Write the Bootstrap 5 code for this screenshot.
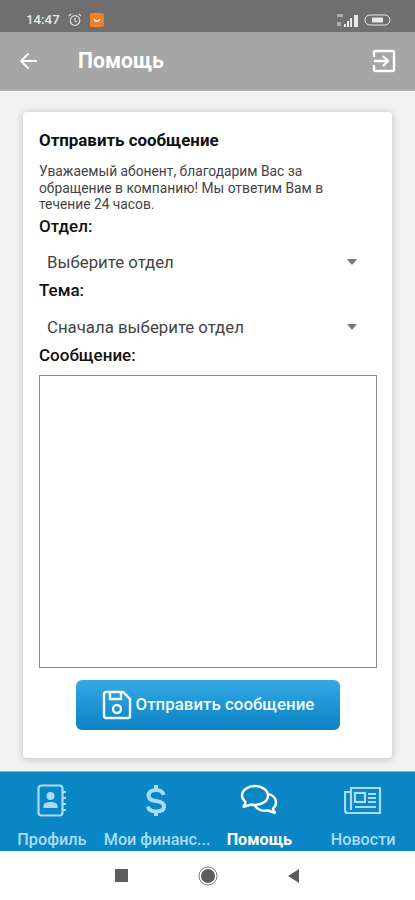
<!DOCTYPE html>
<html lang="ru">
  <head>
    <meta charset="UTF-8" />
    <meta name="viewport" content="width=device-width, initial-scale=1.0" />
    <title>Помощь</title>
    <link href="https://cdn.jsdelivr.net/npm/bootstrap@5.3.0/dist/css/bootstrap.min.css" rel="stylesheet" />
    <style>
      body {
        font-family: Roboto, "Liberation Sans", sans-serif;
        background: #f2f2f2;
        height: 900px;
        overflow: hidden;
        color: #111;
      }
      .status-bar {
        height: 32px;
        background: #6f6f6f;
        color: #e8e8e8;
        font-size: 13.300px;
        font-weight: 500;
        padding: 8px 24px 0 26px;
      }
      .top-bar {
        height: 59px;
        background: #a6a6a6;
        color: #fff;
        padding: 0 19px;
        border-bottom: 1px solid #b4b4b4;
      }
      .top-title {
        font-size: 21.200px;
        font-weight: 700;
        margin-left: 39px;
      }
      .page-main {
        height: 680px;
        padding: 21px 23px 13px;
      }
      .msg-card {
        height: 646px;
        border: 0;
        border-radius: 4px;
        padding: 18px 15px 28px 16px;
        box-shadow: 0 1px 8px rgba(0, 0, 0, 0.22);
      }
      .msg-title {
        font-size: 16.900px;
        font-weight: 700;
        line-height: 20px;
        margin-bottom: 13px;
      }
      .msg-intro {
        font-size: 13.800px;
        line-height: 16.500px;
        color: #444;
        max-width: 292px;
        margin-bottom: 3px;
      }
      .msg-label {
        display: block;
        font-size: 17px;
        font-weight: 500;
        line-height: 20px;
        margin-bottom: 9px;
      }
      .msg-select {
        height: 36px;
        border: 0;
        border-radius: 0;
        padding: 0 8px;
        font-size: 16.800px;
        color: #444;
        background-color: transparent;
        background-image: url("data:image/svg+xml,%3csvg xmlns='http://www.w3.org/2000/svg' viewBox='0 0 10 6'%3e%3cpath fill='%23777' d='M0 0h10L5 6z'/%3e%3c/svg%3e");
        background-size: 10px 6px;
        background-position: right 20px center;
      }
      .msg-area {
        display: block;
        height: 293px;
        margin-top: 1px;
        border: 1px solid #8c8c8c;
        border-radius: 0;
        resize: none;
      }
      .send-btn {
        width: 264px;
        height: 50px;
        margin: 12px auto 0;
        padding: 0;
        border: 0;
        border-radius: 6px;
        color: #f2fafe;
        font-size: 16.900px;
        font-weight: 500;
        background: linear-gradient(#35a9e4, #0b82c2);
      }
      .tab-bar {
        height: 80px;
        background: #0a86c5;
        border-top: 1px solid #66b8e0;
      }
      .tab-item {
        width: 25%;
        color: #a9dcf5;
        font-size: 16.200px;
        font-weight: 500;
        white-space: nowrap;
        padding-top: 12px;
      }
      .tab-icon {
        height: 33px;
        margin-bottom: 11px;
      }
      .tab-on {
        color: #fff;
        font-weight: 700;
      }
      .sys-bar {
        height: 49px;
        background: #fff;
        gap: 70px;
      }
    </style>
  </head>
  <body>
    <div class="status-bar d-flex align-items-center">
      <span>14:47</span>
      <svg class="ms-2" width="14" height="14" viewBox="0 0 14 14" fill="none" stroke="#ddd" stroke-width="1.2">
        <circle cx="7" cy="7.500" r="4.800" />
        <path d="M7 5v3l2 1M1 3l2-2M13 3l-2-2" />
      </svg>
      <svg class="ms-2" width="14" height="14" viewBox="0 0 14 14">
        <rect width="14" height="14" rx="2" fill="#f07f2c" />
        <path d="M4 6c1 3 5 3 6 0" fill="none" stroke="#fff" stroke-width="1.300" />
      </svg>
      <svg class="ms-auto" width="23" height="14" viewBox="0 0 23 14" fill="#e8e8e8">
        <path d="M7 11h2v3H7zM10 8h2v6h-2zM13 5h2v9h-2zM17 2h4v12h-4z" />
        <path d="M0 1h6v3H0zM0 9h4v4H0z" opacity="0.500" />
      </svg>
      <svg class="ms-1" width="27" height="14" viewBox="0 0 27 14" fill="none" stroke="#e8e8e8">
        <rect x="1" y="2" width="25" height="10" rx="5" />
        <rect x="8" y="4.500" width="11" height="5" fill="#e8e8e8" stroke="none" />
      </svg>
    </div>

    <div class="top-bar d-flex align-items-center">
      <svg width="20" height="20" viewBox="0 0 20 20" fill="none" stroke="#fff" stroke-width="1.800">
        <path d="M18 10H2M9.500 2.500 2 10l7.500 7.500" />
      </svg>
      <span class="top-title">Помощь</span>
      <svg class="ms-auto" width="24" height="24" viewBox="0 0 24 24" fill="none" stroke="#fff" stroke-width="2.400">
        <path d="M2 8V3.500A1.500 1.500 0 0 1 3.500 2h17A1.500 1.500 0 0 1 22 3.500v17a1.500 1.500 0 0 1-1.500 1.500h-17A1.500 1.500 0 0 1 2 20.500V16M2 12h14M11 7l5 5-5 5" />
      </svg>
    </div>

    <main class="page-main">
      <div class="card msg-card">
        <div class="msg-title">Отправить сообщение</div>
        <p class="msg-intro">Уважаемый абонент, благодарим Вас за обращение в компанию! Мы ответим Вам в течение 24 часов.</p>
        <label class="msg-label" for="dept">Отдел:</label>
        <select class="form-select msg-select" id="dept">
          <option>Выберите отдел</option>
        </select>
        <label class="msg-label" for="topic">Тема:</label>
        <select class="form-select msg-select" id="topic">
          <option>Сначала выберите отдел</option>
        </select>
        <label class="msg-label" for="message">Сообщение:</label>
        <textarea class="form-control msg-area" id="message"></textarea>
        <button type="button" class="btn send-btn d-flex align-items-center justify-content-center gap-1">
          <svg width="30" height="30" viewBox="0 0 30 30" fill="none" stroke="#f2fafe" stroke-width="2.400">
            <path d="M4 2h17l7 7v17a2 2 0 0 1-2 2H4a2 2 0 0 1-2-2V4a2 2 0 0 1 2-2z" />
            <path d="M8 2v7h11V2" />
            <circle cx="15" cy="19" r="4" />
          </svg>
          Отправить сообщение
        </button>
      </div>
    </main>

    <nav class="tab-bar d-flex text-center">
      <div class="tab-item">
        <svg class="tab-icon" width="30" height="33" viewBox="0 0 30 33" fill="none" stroke="#a9dcf5" stroke-width="2.200">
          <rect x="1.500" y="1.500" width="24" height="30" rx="3" />
          <path d="M26 8h3M26 14h3M26 20h3M26 26h3" />
          <circle cx="13.500" cy="12" r="4" fill="#a9dcf5" stroke="none" />
          <path d="M6.500 24v-2c0-3 3-4 7-4s7 1 7 4v2z" fill="#a9dcf5" stroke="none" />
        </svg>
        <div>Профиль</div>
      </div>
      <div class="tab-item">
        <svg class="tab-icon" width="20" height="33" viewBox="0 0 20 33" fill="none" stroke="#a9dcf5" stroke-width="4">
          <path d="M10 1v5M10 27v5M17.500 11c-.5-3-3.500-5-7.500-5s-7.500 2-7.500 5.500 3 5 7.500 5.500 8 2 8 5.500-3.500 5-8 5-7.500-2-8-5" />
        </svg>
        <div>Мои финанс...</div>
      </div>
      <div class="tab-item tab-on">
        <svg class="tab-icon" width="38" height="33" viewBox="0 0 38 33" fill="none" stroke="#fff" stroke-width="2.400">
          <path d="M15 2c7 0 13 4 13 9.500S22 21 15 21c-1.500 0-3-.2-4-.5L3 23c1.500-1.500 2.500-3.500 2.500-5C3 16 2 14 2 11.500 2 6 8 2 15 2z" />
          <path d="M29 10c4 1.500 7 4.500 7 8.500 0 2.500-1 4.500-3 6 0 1.500 1 3 2.500 4.500l-7.500-2.500c-5 1-11-.5-13-5" />
        </svg>
        <div>Помощь</div>
      </div>
      <div class="tab-item">
        <svg class="tab-icon" width="38" height="33" viewBox="0 0 38 33" fill="none" stroke="#a9dcf5" stroke-width="2.200">
          <path d="M7 4h29v25H4c-2 0-3-1-3-3V8h6zM7 8v18" />
          <rect x="11" y="9" width="10" height="9" />
          <path d="M24 10h8M24 14h8M24 18h8M11 23h21" />
        </svg>
        <div>Новости</div>
      </div>
    </nav>

    <div class="sys-bar d-flex align-items-center justify-content-center">
      <svg width="14" height="14" viewBox="0 0 14 14"><rect x="1" width="13" height="13" fill="#5c5c5c" /></svg>
      <svg width="20" height="20" viewBox="0 0 20 20"><circle cx="10" cy="10" r="7" fill="#5c5c5c" /><circle cx="10" cy="10" r="9" fill="none" stroke="#777" /></svg>
      <svg width="14" height="14" viewBox="0 0 14 14"><path d="M11 0v14L0 7z" fill="#5c5c5c" /></svg>
    </div>

    <script src="https://cdn.jsdelivr.net/npm/bootstrap@5.3.0/dist/js/bootstrap.bundle.min.js"></script>
  </body>
</html>
